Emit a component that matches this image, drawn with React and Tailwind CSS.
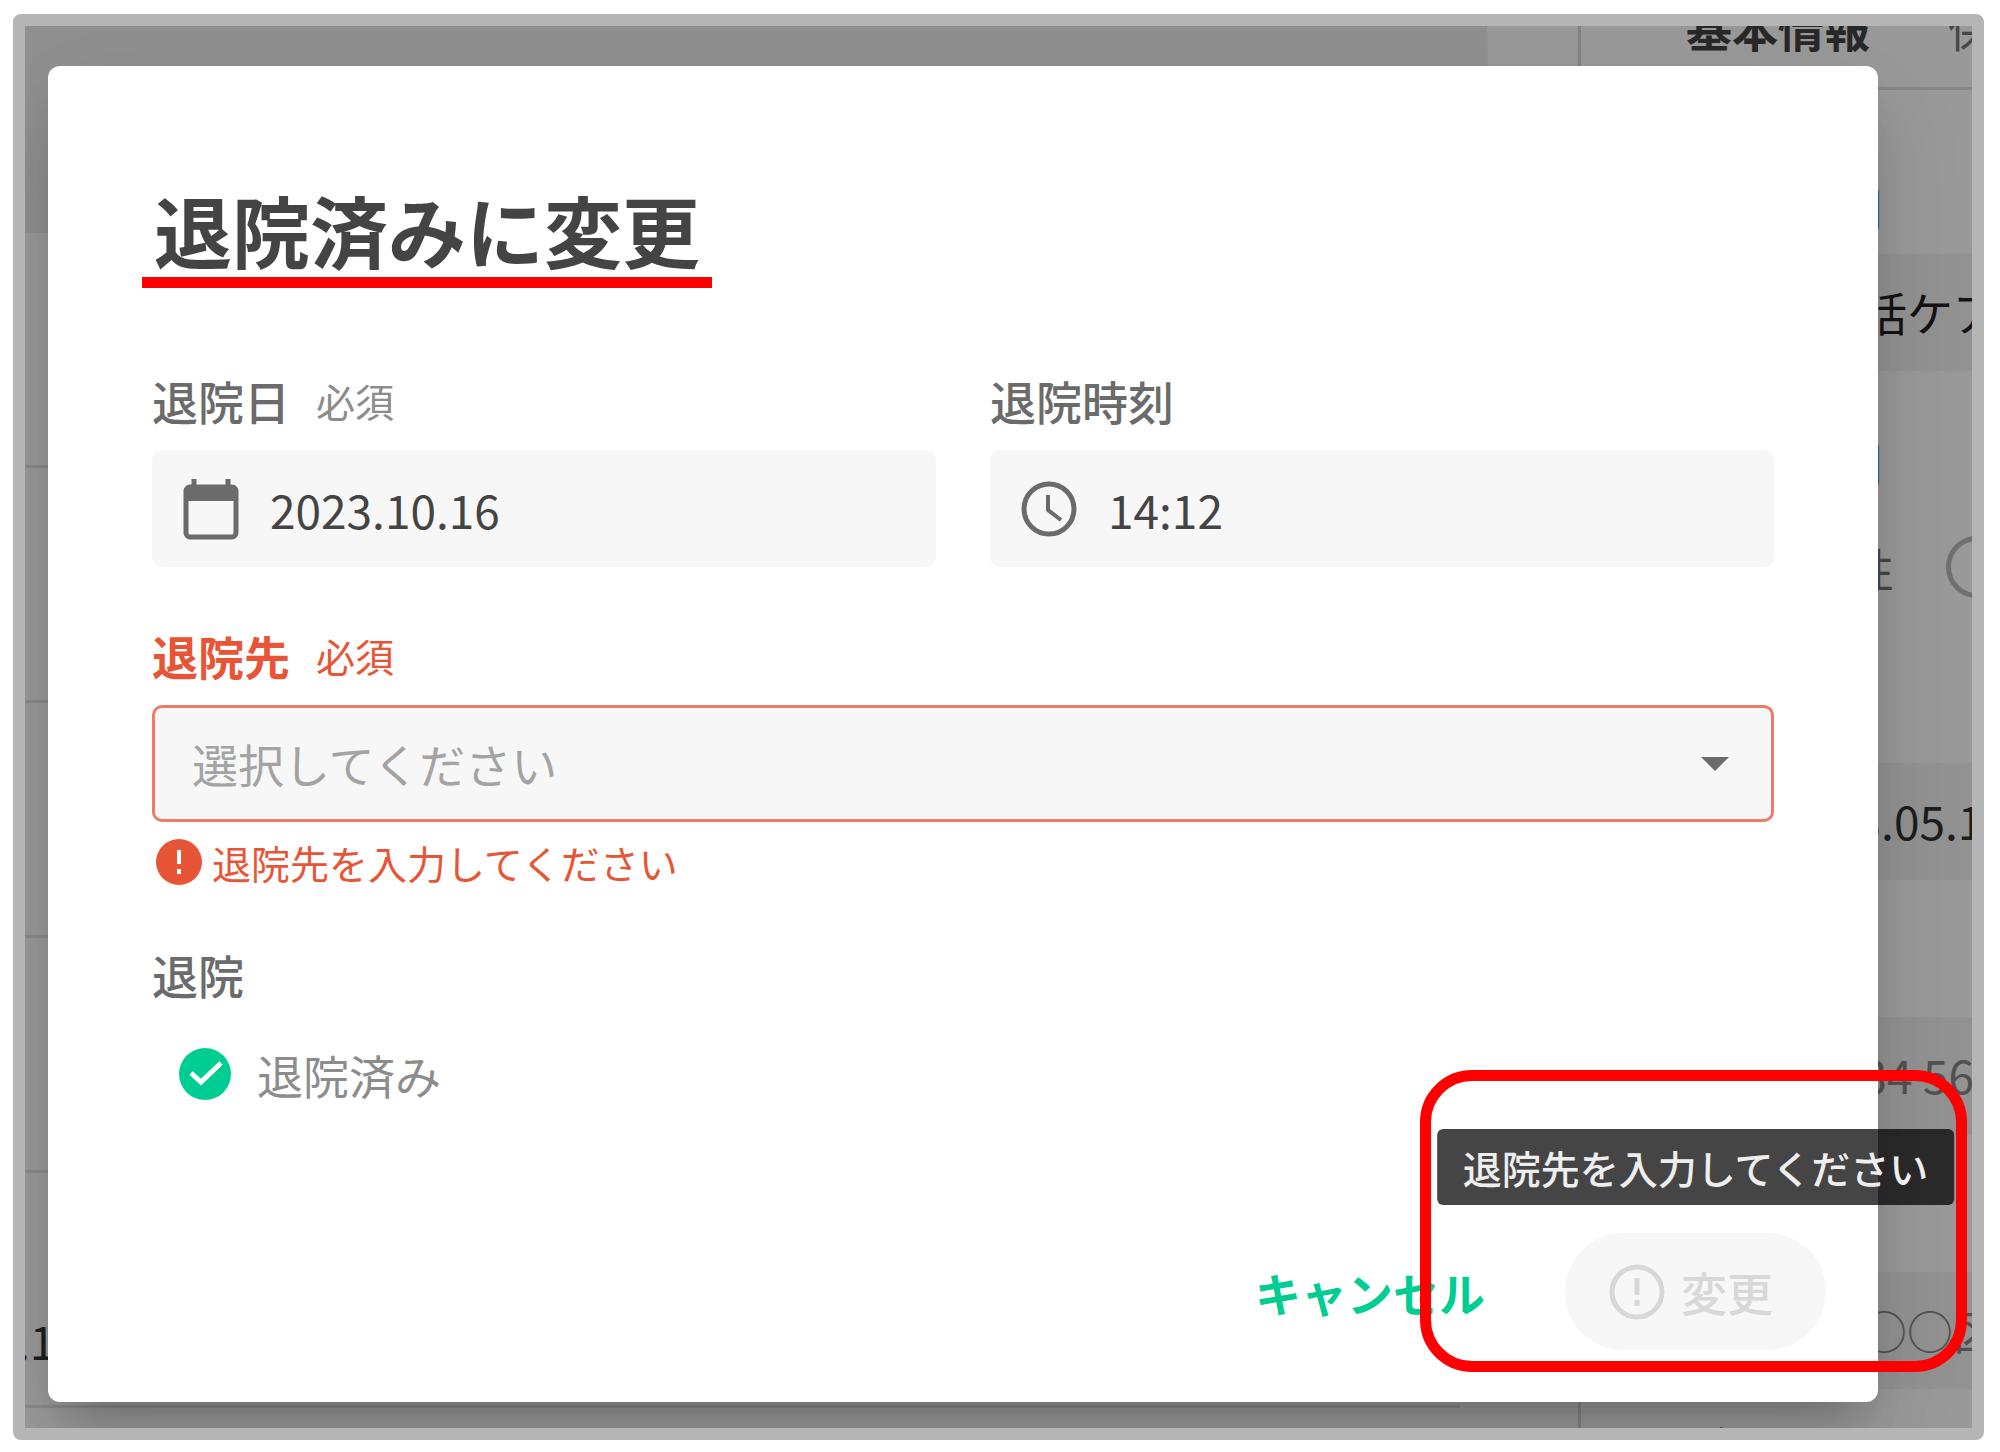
import { useState } from "react";

const listRows = ["", "", "", "", ".11"];

const CalendarIcon = () => (
  <svg viewBox="0 0 56 62" className="h-[62px] w-14 shrink-0" fill="none" aria-hidden="true">
    <path d="M11 1v8M45 1v8" stroke="#6b6b6b" strokeWidth="5" />
    <rect x="3" y="9" width="50" height="50" rx="4" stroke="#6b6b6b" strokeWidth="5" />
    <path d="M3 10h50v13H3z" fill="#6b6b6b" />
  </svg>
);

const ClockIcon = () => (
  <svg viewBox="0 0 56 56" className="size-14 shrink-0" fill="none" stroke="#6b6b6b" aria-hidden="true">
    <circle cx="28" cy="28" r="25" strokeWidth="5" />
    <path d="M27 14v15l13 10" strokeWidth="4" />
  </svg>
);

const ErrorIcon = () => (
  <svg viewBox="0 0 46 46" className="size-[46px] shrink-0" aria-hidden="true">
    <circle cx="23" cy="23" r="23" fill="#e85536" />
    <path d="M23 11v14M23 30v5" stroke="#fff" strokeWidth="4" />
  </svg>
);

const AlertIcon = () => (
  <svg viewBox="0 0 56 56" className="size-14 shrink-0" fill="none" stroke="currentColor" aria-hidden="true">
    <circle cx="28" cy="28" r="25" strokeWidth="5" />
    <path d="M28 14v17M28 36v6" strokeWidth="5" />
  </svg>
);

const CheckIcon = () => (
  <svg
    viewBox="0 0 52 52"
    className="pointer-events-none col-start-1 row-start-1 size-[52px]"
    fill="none"
    aria-hidden="true"
  >
    <path d="M12 25l10 9 20-19" stroke="#fff" strokeWidth="5" />
  </svg>
);

// Patient page that sits behind the dialog
const PatientPage = () => (
  <div className="absolute inset-0 flex overflow-hidden bg-white text-[46px] leading-[50px] text-[#333]" aria-hidden="true">
    {/* Patient list */}
    <div className="min-w-0 flex-1 border-r-3 border-[#dcdcdc]">
      <div className="mr-[91px] h-[207px] bg-[#f0f0f0]"></div>
      {listRows.map((row, i) => (
        <div key={i} className="mr-[118px] flex h-[235px] items-end border-b-3 border-[#e6e6e6] pb-10">
          <span className="-ml-2">{row}</span>
        </div>
      ))}
    </div>

    {/* Patient detail */}
    <div className="w-[391px] shrink-0 overflow-hidden whitespace-nowrap">
      <div className="flex h-16 items-start border-b-3 border-[#e2e2e2] pl-[105px]">
        <div className="-mt-6 flex gap-[78px]">
          <span className="font-bold text-[#444]">基本情報</span>
          <span className="text-[#777]">保険</span>
        </div>
      </div>
      <div className="flex h-[164px] items-end pb-6 pl-[209px] text-[#4a9be0]">詳細</div>
      <div className="h-[117px] bg-[#f4f4f4] pl-[234px] leading-[114px] text-[#222]">包括ケア</div>
      <div className="flex h-[114px] items-end pl-[209px] text-[#4a9be0]">詳細</div>
      <div className="flex h-[164px] items-center gap-[52px] pl-[221px] text-[#777]">
        女性
        <span className="size-[62px] shrink-0 rounded-full border-5 border-[#bbb]"></span>
      </div>
      <div className="h-[114px]"></div>
      <div className="h-[117px] bg-[#f4f4f4] pl-[198px] leading-[114px]">2023.05.16</div>
      <div className="h-[137px]"></div>
      <div className="h-[118px] bg-[#f4f4f4] pl-[255px] leading-[114px] text-[#888]">234 56</div>
      <div className="h-[137px]"></div>
      <div className="h-[117px] bg-[#f4f4f4] pl-[280px] leading-[114px] text-[#888]">○○区</div>
      <div className="pt-8 pl-[118px]">自宅電話番号</div>
    </div>
  </div>
);

const FieldLabel = ({ htmlFor, required, error, children }) => (
  <label
    htmlFor={htmlFor}
    className={`flex items-center gap-[26px] text-[46px] leading-14 ${error ? "font-bold text-[#e85536]" : "font-medium text-[#6b6b6b]"}`}
  >
    {children}
    {required && (
      <span className={`text-[39px] font-normal ${error ? "text-[#e85536]" : "text-[#8c8c8c]"}`}>必須</span>
    )}
  </label>
);

const App = () => {
  const [date, setDate] = useState("2023.10.16");
  const [time, setTime] = useState("14:12");
  const [destination, setDestination] = useState("");
  const [discharged, setDischarged] = useState(true);

  return (
    <div className="bg-white pt-3.5 pr-4 pb-3 pl-[13px] font-['Noto_Sans_CJK_JP','Noto_Sans',sans-serif]">
      <div className="relative overflow-hidden rounded-lg border-12 border-[#b5b5b5]">
        <PatientPage />
        <div className="absolute inset-0 bg-black/40"></div>

        {/* Dialog */}
        <div
          role="dialog"
          aria-labelledby="dialog-title"
          className="relative mt-10 mr-[94px] mb-[26px] ml-[23px] rounded-xl bg-white pt-[123px] pb-[52px] shadow-[0_31px_42px_-20px_rgba(0,0,0,0.2),0_50px_70px_0_rgba(0,0,0,0.06),0_25px_100px_0_rgba(0,0,0,0.08)]"
        >
          <div className="px-[104px]">
            <h1
              id="dialog-title"
              className="-ml-2.5 w-fit border-b-11 border-[#ff0000] px-3 pb-2 text-[78px] leading-20 font-bold text-[#444]"
            >
              退院済みに変更
            </h1>

            {/* Date and time */}
            <div className="mt-21 grid grid-cols-2 gap-[54px]">
              <div>
                <FieldLabel htmlFor="date" required>退院日</FieldLabel>
                <div className="mt-[22px] flex h-[117px] items-center gap-[31px] rounded-[10px] bg-[#f7f7f7] px-[31px]">
                  <CalendarIcon />
                  <input
                    id="date"
                    type="text"
                    value={date}
                    onChange={(e) => setDate(e.target.value)}
                    className="w-full min-w-0 bg-transparent text-[46px] leading-[60px] text-[#444] outline-none"
                  />
                </div>
              </div>
              <div>
                <FieldLabel htmlFor="time">退院時刻</FieldLabel>
                <div className="mt-[22px] flex h-[117px] items-center gap-[31px] rounded-[10px] bg-[#f7f7f7] px-[31px]">
                  <ClockIcon />
                  <input
                    id="time"
                    type="text"
                    value={time}
                    onChange={(e) => setTime(e.target.value)}
                    className="w-full min-w-0 bg-transparent text-[46px] leading-[60px] text-[#444] outline-none"
                  />
                </div>
              </div>
            </div>

            {/* Destination */}
            <div className="mt-15">
              <FieldLabel htmlFor="destination" required error>退院先</FieldLabel>
              <div className="mt-[22px] grid items-center">
                <select
                  id="destination"
                  value={destination}
                  onChange={(e) => setDestination(e.target.value)}
                  className="col-start-1 row-start-1 h-[117px] w-full appearance-none rounded-[10px] border-3 border-[#ee7c64] bg-[#f7f7f7] px-[37px] text-[46px] text-[#a3a3a3] outline-none"
                >
                  <option value="">選択してください</option>
                  <option value="home">自宅</option>
                </select>
                <svg
                  viewBox="0 0 28 14"
                  className="pointer-events-none col-start-1 row-start-1 mr-[45px] h-3.5 w-7 justify-self-end"
                  aria-hidden="true"
                >
                  <path d="M0 0h28L14 14z" fill="#6b6b6b" />
                </svg>
              </div>
              <p className="mt-3 flex items-center gap-2.5 pl-1 text-[39px] leading-14 text-[#e85536]">
                <ErrorIcon />
                退院先を入力してください
              </p>
            </div>

            {/* Status */}
            <fieldset className="mt-[54px]">
              <legend className="text-[46px] leading-[60px] font-medium text-[#6b6b6b]">退院</legend>
              <label className="mt-10 flex w-fit items-center gap-[26px] pl-[27px] text-[46px] leading-[60px] text-[#8c8c8c]">
                <span className="grid">
                  <input
                    type="checkbox"
                    checked={discharged}
                    onChange={(e) => setDischarged(e.target.checked)}
                    className="col-start-1 row-start-1 size-[52px] appearance-none rounded-full bg-[#00cd92]"
                  />
                  <CheckIcon />
                </span>
                退院済み
              </label>
            </fieldset>
          </div>

          {/* Actions */}
          <div className="mt-[129px] flex items-center justify-end gap-20 pr-[52px]">
            <button type="button" className="text-[46px] leading-[60px] font-bold text-[#00cd92]">
              キャンセル
            </button>
            <div className="relative">
              <button
                type="submit"
                disabled
                className="flex h-[117px] items-center gap-4 rounded-full bg-[#f7f7f7] pr-[53px] pl-11 text-[46px] font-medium text-[#d8d8d8]"
              >
                <AlertIcon />
                変更
              </button>
              <div
                role="tooltip"
                className="absolute bottom-full left-1/2 mb-7 -translate-x-1/2 rounded-md bg-black/73 px-[26px] text-[39px] leading-[76px] font-medium whitespace-nowrap text-[#eee]"
              >
                退院先を入力してください
              </div>
              {/* Highlight round the button and its tooltip */}
              <div className="pointer-events-none absolute -top-[163px] -right-[141px] -bottom-[22px] -left-[145px] rounded-[52px] border-11 border-[#ff0000]"></div>
            </div>
          </div>
        </div>
      </div>
    </div>
  );
};

export default App;
